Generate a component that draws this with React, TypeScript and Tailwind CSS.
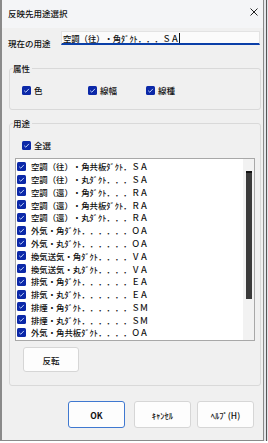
import React from 'react';

const rows = [
  '空調（往）・角共板ﾀﾞｸﾄ．ＳＡ',
  '空調（往）・丸ﾀﾞｸﾄ．．．ＳＡ',
  '空調（還）・角ﾀﾞｸﾄ．．．ＲＡ',
  '空調（還）・角共板ﾀﾞｸﾄ．ＲＡ',
  '空調（還）・丸ﾀﾞｸﾄ．．．ＲＡ',
  '外気・角ﾀﾞｸﾄ．．．．．．ＯＡ',
  '外気・丸ﾀﾞｸﾄ．．．．．．ＯＡ',
  '換気送気・角ﾀﾞｸﾄ．．．．ＶＡ',
  '換気送気・丸ﾀﾞｸﾄ．．．．ＶＡ',
  '排気・角ﾀﾞｸﾄ．．．．．．ＥＡ',
  '排気・丸ﾀﾞｸﾄ．．．．．．ＥＡ',
  '排煙・角ﾀﾞｸﾄ．．．．．．ＳＭ',
  '排煙・丸ﾀﾞｸﾄ．．．．．．ＳＭ',
  '外気・角共板ﾀﾞｸﾄ．．．．ＯＡ',
  '排気・角共板ﾀﾞｸﾄ．．．．ＥＡ',
];

function Check() {
  return (
    <span className="w-[9px] h-[9px] shrink-0 rounded-[1.5px] bg-[#0b28a8] flex items-center justify-center">
      <svg width="9" height="9" viewBox="0 0 9 9">
        <path d="M2.2 4.7 L3.8 6.2 L6.9 2.9" fill="none" stroke="#cfe0ff" strokeWidth="0.9" />
      </svg>
    </span>
  );
}

function CheckItem({ label, className = '' }: { label: string; className?: string }) {
  return (
    <div className={`flex items-center gap-[3px] h-[10px] ${className}`}>
      <Check />
      <span className="leading-[10px]">{label}</span>
    </div>
  );
}

export default function App() {
  return (
    <div className="w-[268px] h-[443px] flex flex-col bg-white font-['Noto_Sans_CJK_JP',sans-serif] font-medium text-[8.5px] text-[#111] [text-spacing-trim:space-all]">
      <div className="flex h-[441px]">
        <div className="w-[264px] flex flex-col bg-[#f0f0f0] border-l-2 border-r border-b border-[#8a8a8a]">
          {/* title bar */}
          <div className="h-[28px] shrink-0 bg-[#f4f5f7] flex items-center justify-between pl-[6px] pr-[5px]">
            <span className="leading-[10px] -mt-[2px]">反映先用途選択</span>
            <svg width="8" height="8" viewBox="0 0 8 8" className="-mt-[4px]">
              <path d="M0.5 0.5 L7.5 7.5 M7.5 0.5 L0.5 7.5" stroke="#222" strokeWidth="1" />
            </svg>
          </div>

          {/* current usage */}
          <div className="flex items-start mt-[3px] pl-[6px]">
            <span className="w-[53px] mt-[7px] leading-[10px]">現在の用途</span>
            <div className="w-[199px] h-[14px] bg-[#fbfbfb] border border-[#e3e3e3] border-b-2 border-b-[#0a3fa8] flex items-center pl-[1px]">
              <span className="leading-[10px] text-[8.3px]">空調（往）・角ﾀﾞｸﾄ．．．ＳＡ</span>
              <span className="w-px h-[10px] bg-[#111]" />
            </div>
          </div>

          {/* attributes */}
          <fieldset className="ml-[7px] mt-[15px] w-[252px] border border-[#d9d9d9] rounded-[3px]">
            <legend className="ml-[3px] pr-[2px] leading-[10px]">属性</legend>
            <div className="flex pl-[12px] pt-[12px] pb-[14px]">
              <CheckItem label="色" className="w-[66px]" />
              <CheckItem label="線幅" className="w-[58px]" />
              <CheckItem label="線種" />
            </div>
          </fieldset>

          {/* usages */}
          <fieldset className="ml-[7px] mt-[8px] w-[252px] border border-[#d9d9d9] rounded-[3px]">
            <legend className="ml-[3px] pr-[2px] leading-[10px]">用途</legend>
            <div className="flex flex-col pt-[12px] pb-[13px]">
              <CheckItem label="全選" className="ml-[12px]" />
              <div className="ml-[5px] mt-[8px] w-[240px] h-[183px] bg-white border border-[#a8a8a8] flex">
                <div className="flex-1 overflow-hidden pt-px">
                  {rows.map((r, i) => (
                    <div key={i} className="h-[12.77px] flex items-center pl-px gap-[5px]">
                      <Check />
                      <span className="text-[8.4px] leading-[10px] whitespace-nowrap">{r}</span>
                    </div>
                  ))}
                </div>
                <div className="w-[11px] bg-[#f2f2f2] pt-[12px] flex justify-center">
                  <div className="w-[6px] h-[128px] bg-[#3a3a3a] border-t-2 border-[#111]" />
                </div>
              </div>
              <button className="ml-[13px] mt-[6px] w-[56px] h-[25px] bg-[#fdfdfd] border border-[#d6d6d6] rounded-[3px] leading-[10px]">
                反転
              </button>
            </div>
          </fieldset>

          {/* dialog buttons */}
          <div className="flex mt-[15px] ml-[66px]">
            <button className="w-[57px] h-[27px] bg-[#fdfdfd] border border-[#3f78d0] rounded-[3px] leading-[10px] font-semibold">
              OK
            </button>
            <button className="ml-[9px] w-[57px] h-[27px] bg-[#fdfdfd] border border-[#d6d6d6] rounded-[3px] leading-[10px]">
              ｷｬﾝｾﾙ
            </button>
            <button className="ml-[6px] w-[57px] h-[27px] bg-[#fdfdfd] border border-[#d6d6d6] rounded-[3px] leading-[10px]">
              ﾍﾙﾌﾟ(H)
            </button>
          </div>
        </div>
        <div className="flex-1 bg-[#e4e6ea] flex justify-center">
          <div className="w-px bg-[#555]" />
        </div>
      </div>
    </div>
  );
}
